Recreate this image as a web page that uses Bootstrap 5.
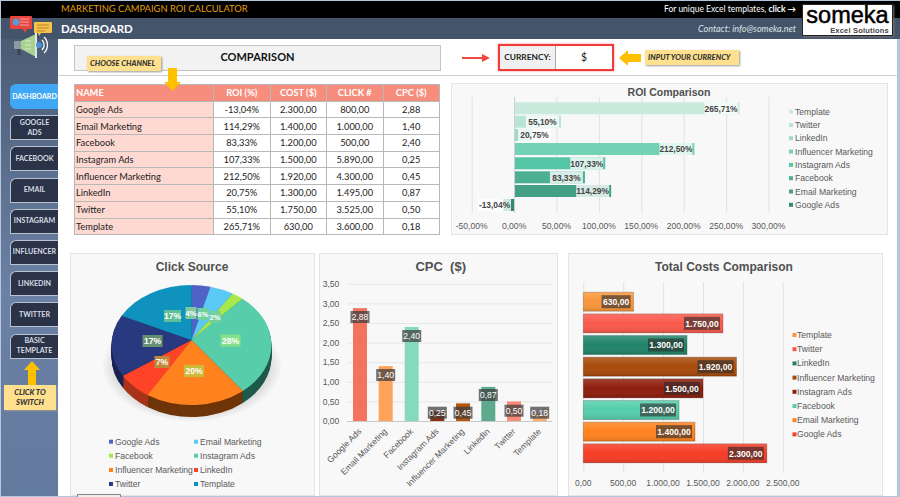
<!DOCTYPE html>
<html lang="en">
<head>
  <meta charset="UTF-8">
  <title>Marketing Campaign ROI Calculator</title>
  <meta name="viewport" content="width=device-width, initial-scale=1.0"/>
  <link href="https://cdn.jsdelivr.net/npm/bootstrap@5.3.3/dist/css/bootstrap.min.css" rel="stylesheet">
  <style>
    html, body { height: 497px; overflow: hidden; }
    body { background: #b5c6df; font-family: "Lato", "Liberation Sans", sans-serif; padding: 1px 0 0 1px; }
    .top-strip { height: 17px; background: #000; font-size: 8.5px; padding: 0 104px 0 60px; }
    .app-title { color: #e39f0b; font-size: 9.4px; }
    .head-strip { height: 21px; background: #44546a; padding: 0 104px 0 60px; }
    .head-title { font-size: 11.4px; font-weight: 700; }
    .head-contact { color: #dfe3e8; font-size: 9px; font-style: italic; }
    .brand-box { position: absolute; left: 801px; top: 3px; width: 91px; height: 32px; background: #fff; border: 1px solid #222; box-shadow: 1px 1px 2px #777; z-index: 3; text-align: center; font-family: "Liberation Sans", sans-serif; }
    .brand-word { font-size: 23.5px; line-height: 21px; height: 21px; -webkit-text-stroke: .5px #000; color: #000; }
    .brand-sub { font-size: 7.5px; line-height: 9px; font-weight: 700; color: #444; text-align: right; padding-right: 3px; letter-spacing: .2px; }
    .logo-art { position: absolute; left: 8px; top: 13px; z-index: 3; }
    .side-col { width: 57px; height: 457px; background: linear-gradient(#4a5b74, #6b81a5 55%, #627a9e); padding-top: 45px; flex: none; }
    .side-btn { margin-left: 9px; width: 48px; height: 25px; margin-bottom: 6.2px; background: #2a3347; border: 1px solid #b9c2d0; border-right: 0; border-radius: 6px 0 0 0; color: #d9dde4; font-size: 7.1px; font-weight: 700; line-height: 10px; }
    .side-btn.is-on { background: #3fa7f3; border-color: #3fa7f3; border-radius: 6px 0 0 6px; color: #fff; }
    .side-arrow { display: block; margin: -4px 0 0 22px; }
    .tip-tag { background: #ffe08f; box-shadow: 1px 1px 2px #999; color: #333; font-size: 7.6px; font-weight: 900; font-style: italic; line-height: 10px; white-space: nowrap; }
    .tip-side { width: 52px; height: 25px; margin-left: 3px; text-align: center; padding-top: 2px; }
    .main-pane { width: 839px; height: 457px; background: #fff; position: relative; flex: none; }
    .row-top { height: 27px; margin: 5px 0 0 16px; }
    .compare-box { width: 367px; height: 26px; background: #f2f2f2; border: 1px solid #c4c4c4; font-size: 11px; font-weight: 700; color: #111; }
    .currency-box { width: 116px; height: 27px; border: 2px solid #f03b3b; font-size: 8.4px; font-weight: 700; color: #222; margin: 0 5px 0 8px; box-shadow: 0 0 2px #f88; }
    .currency-label { width: 56px; background: #f0f0f0; border-right: 1px solid #aaa; }
    .currency-value { font-size: 10.5px; font-weight: 400; }
    .tag-currency { width: 94px; height: 15px; margin-left: 4px; padding-left: 3px; line-height: 15px; }
    .tag-channel { position: absolute; left: 29px; top: 17px; width: 74px; height: 15px; line-height: 15px; padding-left: 3px; z-index: 2; }
    .arrow-channel { position: absolute; left: 106px; top: 29px; z-index: 2; }
    .arrow-red { margin-left: 21px; }
    .rule-line { height: 1px; background: #cfcfcf; margin-top: 4px; }
    .row-mid { margin: 7px 0 0 16px; height: 152px; }
    .roi-grid { width: 365px; height: 151px; margin: 1px 0 0; table-layout: fixed; border-color: #b8b8b8; font-size: 9.3px; color: #222; --bs-table-bg: transparent; flex: none; }
    .roi-grid th, .roi-grid td { padding: 0 1px; height: 16.7px; line-height: 15px; text-align: center; vertical-align: middle; white-space: nowrap; }
    .roi-grid th { background: #f78d7c; color: #fff; font-weight: 700; }
    .roi-grid td:first-child, .roi-grid th:first-child { text-align: left; }
    .roi-grid td:first-child { background: #fdd9d2; }
    .w-name { width: 139px; }
    .w-val { width: 56.5px; }
    .chart-box { background: #f8f8f8; border: 1px solid #e4e4e4; border-radius: 0; flex: none; }
    .chart-box svg { display: block; }
    .chart-roi { width: 437px; height: 152px; margin-left: 11px; }
    .row-low { margin: 18px 0 0 12px; gap: 4px; }
    .chart-pie { width: 245px; height: 243px; }
    .chart-cpc { width: 239px; height: 243px; }
    .chart-cost { width: 315px; height: 243px; margin-left: 6px; }
    .stub-box { position: absolute; left: 19px; bottom: -2px; width: 44px; height: 4px; background: #eee; border: 1px solid #888; z-index: 2; }
    svg text { font-family: "Liberation Sans", sans-serif; fill: #595959; font-size: 8.6px; }
    svg text.chart-title { font-size: 12px; font-weight: 700; fill: #505050; }
    svg text.roi-title { font-size: 10.5px; }
    svg text.cpc-title { font-size: 13px; }
    svg text.data-tag { font-weight: 700; fill: #fff; font-size: 8.6px; }
    svg text.data-tiny { font-size: 7.6px; }
    svg text.roi-value { font-weight: 700; fill: #444; font-size: 8.4px; }
    svg text.cpc-value { fill: #fff; }
  </style>
</head>
<body>
  <div class="position-relative">
    <!-- header -->
    <div class="top-strip d-flex align-items-center justify-content-between text-white">
      <span class="app-title">MARKETING CAMPAIGN ROI CALCULATOR</span>
      <span>For unique Excel templates, <b>click →</b></span>
    </div>
    <div class="head-strip d-flex align-items-center justify-content-between text-white">
      <span class="head-title">DASHBOARD</span>
      <span class="head-contact">Contact: info@someka.net</span>
    </div>
    <div class="brand-box">
      <div class="brand-word">someka</div>
      <div class="brand-sub">Excel Solutions</div>
    </div>
    <svg class="logo-art" width="46" height="44" viewBox="0 0 46 44">
      <path d="M2 2h20a1 1 0 0 1 1 1v11a1 1 0 0 1-1 1h-4l-2 4-2-4H2a1 1 0 0 1-1-1V3a1 1 0 0 1 1-1z" fill="#e8453f"/>
      <circle cx="7" cy="8" r="3.500" fill="#5b9bd5"/>
      <path d="M11 5h9M11 8h9M11 11h9" stroke="#f4a9a4" stroke-width="1"/>
      <path d="M26 8h16a1 1 0 0 1 1 1v9a1 1 0 0 1-1 1H32l-2 3-1-3h-3a1 1 0 0 1-1-1V9a1 1 0 0 1 1-1z" fill="#f5c24c"/>
      <path d="M28 11h12M28 14h12M28 17h8" stroke="#b8862a" stroke-width="1"/>
      <path d="M6 27h6v8H6a1 1 0 0 1-1-1v-6a1 1 0 0 1 1-1z" fill="#8f99a6"/>
      <path d="M8 35l1 6h3l-1-6z" fill="#3d4656"/>
      <path d="M12 27l15-7v23l-15-8z" fill="#a9d18e"/>
      <path d="M16 27h6M16 31h6M16 35h6" stroke="#d7e8c8" stroke-width="1"/>
      <rect x="26" y="19" width="2" height="25" fill="#dfe4ea"/>
      <circle cx="30" cy="31" r="3" fill="#4a90d9"/>
      <path d="M33 26a7 7 0 0 1 0 10M35 23a11 11 0 0 1 0 16" fill="none" stroke="#fff" stroke-width="1.300"/>
    </svg>

    <div class="d-flex">
      <!-- sidebar -->
      <div class="side-col">
        <div class="side-btn is-on d-flex align-items-center justify-content-center text-center">DASHBOARD</div>
        <div class="side-btn d-flex align-items-center justify-content-center text-center">GOOGLE<br>ADS</div>
        <div class="side-btn d-flex align-items-center justify-content-center text-center">FACEBOOK</div>
        <div class="side-btn d-flex align-items-center justify-content-center text-center">EMAIL</div>
        <div class="side-btn d-flex align-items-center justify-content-center text-center">INSTAGRAM</div>
        <div class="side-btn d-flex align-items-center justify-content-center text-center">INFLUENCER</div>
        <div class="side-btn d-flex align-items-center justify-content-center text-center">LINKEDIN</div>
        <div class="side-btn d-flex align-items-center justify-content-center text-center">TWITTER</div>
        <div class="side-btn d-flex align-items-center justify-content-center text-center">BASIC<br>TEMPLATE</div>
        <svg class="side-arrow" width="18" height="24" viewBox="0 0 18 24"><path d="M9 0l8 9h-4v15H5V9H1z" fill="#ffc000"/></svg>
        <div class="tip-tag tip-side">CLICK TO<br>SWITCH</div>
      </div>

      <!-- main -->
      <div class="main-pane">
        <div class="row-top d-flex align-items-center">
          <div class="compare-box d-flex align-items-center justify-content-center">COMPARISON</div>
          <svg class="arrow-red" width="28" height="10" viewBox="0 0 28 10"><path d="M0 4h20V1l8 4-8 4V6H0z" fill="#f0483e"/></svg>
          <div class="currency-box d-flex">
            <div class="currency-label d-flex align-items-center justify-content-center">CURRENCY:</div>
            <div class="currency-value flex-grow-1 d-flex align-items-center justify-content-center">$</div>
          </div>
          <svg width="22" height="16" viewBox="0 0 22 16"><path d="M0 8l9-8v4h13v8H9v4z" fill="#ffc000"/></svg>
          <div class="tip-tag tag-currency">INPUT YOUR CURRENCY</div>
        </div>
        <div class="tip-tag tag-channel">CHOOSE CHANNEL</div>
        <svg class="arrow-channel" width="17" height="23" viewBox="0 0 17 23"><path d="M4 0h9v14h4l-8.500 9L0 14h4z" fill="#ffc000"/></svg>
        <div class="rule-line"></div>

        <div class="row-mid d-flex">
          <table class="table table-bordered roi-grid">
            <colgroup><col class="w-name"><col class="w-val"><col class="w-val"><col class="w-val"><col class="w-val"></colgroup>
            <thead><tr><th>NAME</th><th>ROI (%)</th><th>COST ($)</th><th>CLICK #</th><th>CPC ($)</th></tr></thead>
            <tbody id="roiRows"></tbody>
          </table>
          <div class="card chart-box chart-roi"><svg id="roiChart" width="435" height="150" viewBox="451 84 435 150"></svg></div>
        </div>

        <div class="row-low d-flex">
          <div class="card chart-box chart-pie"><svg id="pieChart" width="243" height="241" viewBox="71 254 243 241"></svg></div>
          <div class="card chart-box chart-cpc"><svg id="cpcChart" width="237" height="241" viewBox="320 254 237 241"></svg></div>
          <div class="card chart-box chart-cost"><svg id="costChart" width="313" height="241" viewBox="569 254 313 241"></svg></div>
        </div>
        <div class="stub-box"></div>
      </div>
    </div>
  </div>

  <script>
  const channels = [
    ["Google Ads", "-13,04%", "2.300,00", "800,00", "2,88"],
    ["Email Marketing", "114,29%", "1.400,00", "1.000,00", "1,40"],
    ["Facebook", "83,33%", "1.200,00", "500,00", "2,40"],
    ["Instagram Ads", "107,33%", "1.500,00", "5.890,00", "0,25"],
    ["Influencer Marketing", "212,50%", "1.920,00", "4.300,00", "0,45"],
    ["LinkedIn", "20,75%", "1.300,00", "1.495,00", "0,87"],
    ["Twitter", "55,10%", "1.750,00", "3.525,00", "0,50"],
    ["Template", "265,71%", "630,00", "3.600,00", "0,18"]
  ];
  document.getElementById("roiRows").innerHTML = channels.map(r =>
    "<tr>" + r.map(v => `<td>${v}</td>`).join("") + "</tr>").join("");

  const txt = (x, y, s, attrs = "") => `<text x="${x}" y="${y}" ${attrs}>${s}</text>`;
  const rect = (x, y, w, h, fill, attrs = "") => `<rect x="${x}" y="${y}" width="${w}" height="${h}" fill="${fill}" ${attrs}/>`;

  // ROI bars
  (function () {
    let s = txt(668, 96, "ROI Comparison", 'class="chart-title roi-title" text-anchor="middle"');
    const ticks = ["-50,00%", "0,00%", "50,00%", "100,00%", "150,00%", "200,00%", "250,00%", "300,00%"];
    ticks.forEach((t, i) => {
      const x = 470.7 + i * 42.4;
      s += rect(x, 97, 1, 116, "#e2e2e2");
      s += txt(x, 229, t, 'text-anchor="middle"');
    });
    const bars = [
      ["Template", 265.71, "265,71%", 108.3, "#c9eadd"], ["Twitter", 55.1, "55,10%", 121.7, "#b9e5d5"],
      ["LinkedIn", 20.75, "20,75%", 135, "#9bdcc6"], ["Influencer Marketing", 212.5, "212,50%", 149, "#72d2b3"],
      ["Instagram Ads", 107.33, "107,33%", 163.3, "#55c6a5"], ["Facebook", 83.33, "83,33%", 177.3, "#4caf92"],
      ["Email Marketing", 114.29, "114,29%", 191, "#43a084"], ["Google Ads", -13.04, "-13,04%", 205, "#2f8a70"]
    ];
    bars.forEach((b, i) => {
      const w = b[1] * 0.8476, x0 = w < 0 ? 513.3 + w : 513.3;
      s += rect(x0, b[3] - 6, Math.abs(w), 12, b[4]);
      let lx = 513.3 + w - 35;
      if (b[1] < 0) lx = 477;
      if (b[1] > 0 && b[1] < 30) lx = 517;
      s += rect(lx, b[3] - 6, 33, 12, "#fff", 'fill-opacity="0.78"');
      s += txt(lx + 16.500, b[3] + 3.200, b[2], 'class="roi-value" text-anchor="middle"');
      s += rect(788, 109.7 + i * 13.3, 4, 4, b[4]);
      s += txt(794, 114.7 + i * 13.3, b[0]);
    });
    s += rect(513, 97, 1, 116, "#d0d0d0");
    document.getElementById("roiChart").innerHTML = s;
  })();

  // Pie, drawn with layers for the depth
  (function () {
    const cx = 191.5, cy = 345, rx = 80, ry = 60, depth = 12;
    const slices = [
      [3.8, "#4f63c7", "#2b3a80"], [4.8, "#5bc9f5", "#2f7f9e"], [2.4, "#a9e84a", "#6a9a2a"],
      [27.9, "#58cda9", "#1f5a4c"], [20.4, "#ff821e", "#6e3508"], [7.1, "#ff4326", "#a8321a"],
      [16.7, "#29397f", "#182350"], [16.9, "#0f92bd", "#0a5a78"]
    ];
    const pt = (deg, oy) => {
      const a = deg * Math.PI / 50;
      return [cx + rx * Math.sin(a), cy - ry * Math.cos(a) + oy];
    };
    const wedge = (from, to, fill, oy) => {
      const p = pt(from, oy), q = pt(to, oy);
      const big = to - from > 50 ? 1 : 0;
      return `<path d="M${cx} ${cy - 5 + oy}L${p[0]} ${p[1]}A${rx} ${ry} 0 ${big} 1 ${q[0]} ${q[1]}Z" fill="${fill}"/>`;
    };
    let s = `<defs><radialGradient id="pieShade"><stop offset="0.6" stop-color="#a8a8a8"/><stop offset="1" stop-color="#f8f8f8"/></radialGradient></defs>`;
    s += txt(192, 271, "Click Source", 'class="chart-title" text-anchor="middle"');
    s += `<ellipse cx="192" cy="366" rx="90" ry="56" fill="url(#pieShade)"/>`;
    for (let d = depth; d > 0; d -= 1) {
      let at = 0;
      slices.forEach(c => { s += wedge(at, at + c[0], c[2], d); at += c[0]; });
    }
    let at = 0;
    slices.forEach(c => { s += wedge(at, at + c[0], c[1], 0); at += c[0]; });
    const tags = [
      ["17%", 172.5, 316, "#5fbf95", 17, ""], ["4%", 191, 313, "#7fc8a0", 11, " data-tiny"], ["6%", 203, 314, "#6fcf9f", 11, " data-tiny"], ["2%", 215, 317, "#76cf9a", 11, " data-tiny"],
      ["28%", 230.5, 340.5, "#86e08a", 20, ""], ["17%", 152.5, 341, "#688f70", 20, ""], ["7%", 162, 362, "#c1893a", 15, ""], ["20%", 194, 371, "#cdb93a", 20, ""]
    ];
    tags.forEach(t => {
      s += rect(t[1] - t[4] / 2, t[2] - 6, t[4], 12, t[3]);
      s += txt(t[1], t[2] + 3.200, t[0], `class="data-tag${t[5]}" text-anchor="middle"`);
    });
    const legend = [[109, 441.7], [194, 441.7], [109, 455.7], [194, 455.7], [109, 470], [194, 470], [109, 484], [194, 484]];
    legend.forEach((l, i) => {
      s += rect(l[0], l[1] - 2, 4, 4, slices[i][1]);
      s += txt(l[0] + 6, l[1] + 3, channels[i][0]);
    });
    document.getElementById("pieChart").innerHTML = s;
  })();

  // CPC columns
  (function () {
    let s = txt(440.7, 271, "CPC&#160;&#160;($)", 'class="chart-title cpc-title" text-anchor="middle"');
    ["0,00", "0,50", "1,00", "1,50", "2,00", "2,50", "3,00", "3,50"].forEach((t, i) => {
      const y = 421 - i * 19.6;
      s += rect(347, y, 205, 1, i ? "#e6e6e6" : "#c8c8c8");
      s += txt(331, y + 3.200, t, 'text-anchor="middle"');
    });
    const cols = [
      [360, 2.88, "#f4735f", 317], [385.7, 1.4, "#ffa25a", 375], [411.7, 2.4, "#85dabd", 336], [437.3, 0.25, "#8a2f12", 412.7],
      [463, 0.45, "#b4560c", 412.7], [488.3, 0.87, "#5eaa8e", 395], [514, 0.5, "#fb8a7a", 410.7], [539.7, 0.18, "#ffae6e", 412.7]
    ];
    cols.forEach((c, i) => {
      const h = c[1] * 39.2;
      s += rect(c[0] - 7, 421 - h, 14, h, c[2]);
      s += rect(c[0] - 9.500, c[3] - 6, 19, 12, "#3c3c3c", 'fill-opacity="0.72"');
      s += txt(c[0], c[3] + 3.200, channels[i][4], 'class="cpc-value" text-anchor="middle"');
      s += txt(c[0] + 2, 432, channels[i][0], `text-anchor="end" transform="rotate(-45 ${c[0] + 2} 432)"`);
    });
    document.getElementById("cpcChart").innerHTML = s;
  })();

  // Cost bars
  (function () {
    let s = `<defs><linearGradient id="barSheen" x1="0" y1="0" x2="0" y2="1"><stop offset="0" stop-color="#fff" stop-opacity="0.16"/><stop offset="0.5" stop-color="#fff" stop-opacity="0"/><stop offset="1" stop-color="#000" stop-opacity="0.12"/></linearGradient></defs>`;
    s += txt(724, 271, "Total Costs Comparison", 'class="chart-title" text-anchor="middle"');
    ["0,00", "500,00", "1.000,00", "1.500,00", "2.000,00", "2.500,00"].forEach((t, i) => {
      const x = 583.3 + i * 39.9;
      s += rect(x, 282, 1, 191, "#e2e2e2");
      s += txt(x, 486, t, 'text-anchor="middle"');
    });
    const bars = [
      ["Template", 630, "630,00", "#f9963c"], ["Twitter", 1750, "1.750,00", "#f9594a"], ["LinkedIn", 1300, "1.300,00", "#1f8468"],
      ["Influencer Marketing", 1920, "1.920,00", "#a84a0a"], ["Instagram Ads", 1500, "1.500,00", "#8f1d0c"], ["Facebook", 1200, "1.200,00", "#55cdaa"],
      ["Email Marketing", 1400, "1.400,00", "#ff821e"], ["Google Ads", 2300, "2.300,00", "#f63d26"]
    ];
    bars.forEach((b, i) => {
      const y = 301.7 + i * 21.66, w = b[1] * 0.0798;
      s += rect(583.3, y - 9.500, w, 19, b[3], 'stroke="#0003" stroke-width="1"');
      s += rect(583.3, y - 9.500, w, 19, "url(#barSheen)");
      const lw = b[2].length > 6 ? 36 : 29;
      s += rect(583.3 + w - lw - 3, y - 6.500, lw, 13, "#2b2b2b", 'fill-opacity="0.62"');
      s += txt(583.3 + w - 3 - lw / 2, y + 3.200, b[2], 'class="data-tag" text-anchor="middle"');
      s += rect(792.500, 333 + i * 14.2, 4, 4, b[3]);
      s += txt(797, 338 + i * 14.2, b[0]);
    });
    document.getElementById("costChart").innerHTML = s;
  })();
  </script>
  <script src="https://cdn.jsdelivr.net/npm/bootstrap@5.3.3/dist/js/bootstrap.bundle.min.js"></script>
</body>
</html>
